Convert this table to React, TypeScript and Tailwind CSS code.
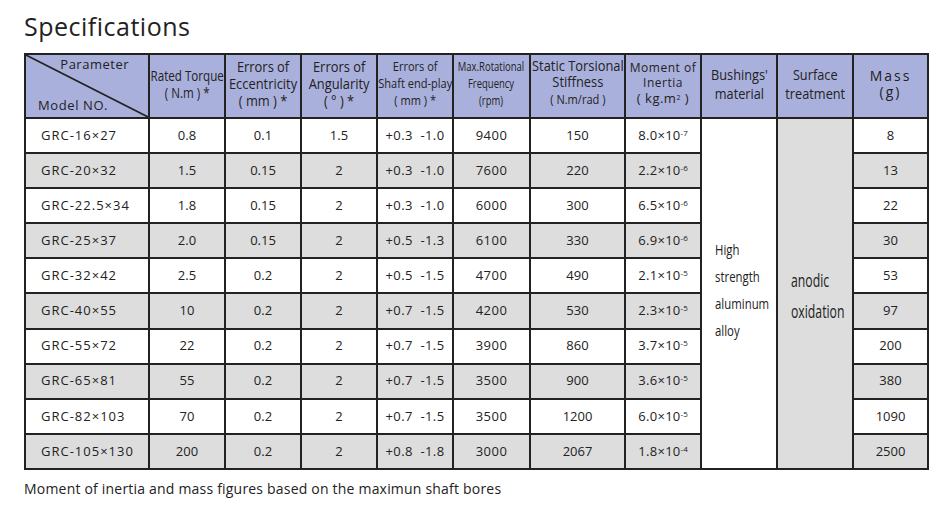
import React from 'react'

type Row = {
  model: string
  torque: string
  ecc: string
  ang: string
  play: string
  freq: string
  stiff: string
  inertia: [string, string]
  mass: string
}

const rows: Row[] = [
  { model: 'GRC-16×27', torque: '0.8', ecc: '0.1', ang: '1.5', play: '+0.3  -1.0', freq: '9400', stiff: '150', inertia: ['8.0', '-7'], mass: '8' },
  { model: 'GRC-20×32', torque: '1.5', ecc: '0.15', ang: '2', play: '+0.3  -1.0', freq: '7600', stiff: '220', inertia: ['2.2', '-6'], mass: '13' },
  { model: 'GRC-22.5×34', torque: '1.8', ecc: '0.15', ang: '2', play: '+0.3  -1.0', freq: '6000', stiff: '300', inertia: ['6.5', '-6'], mass: '22' },
  { model: 'GRC-25×37', torque: '2.0', ecc: '0.15', ang: '2', play: '+0.5  -1.3', freq: '6100', stiff: '330', inertia: ['6.9', '-6'], mass: '30' },
  { model: 'GRC-32×42', torque: '2.5', ecc: '0.2', ang: '2', play: '+0.5  -1.5', freq: '4700', stiff: '490', inertia: ['2.1', '-5'], mass: '53' },
  { model: 'GRC-40×55', torque: '10', ecc: '0.2', ang: '2', play: '+0.7  -1.5', freq: '4200', stiff: '530', inertia: ['2.3', '-5'], mass: '97' },
  { model: 'GRC-55×72', torque: '22', ecc: '0.2', ang: '2', play: '+0.7  -1.5', freq: '3900', stiff: '860', inertia: ['3.7', '-5'], mass: '200' },
  { model: 'GRC-65×81', torque: '55', ecc: '0.2', ang: '2', play: '+0.7  -1.5', freq: '3500', stiff: '900', inertia: ['3.6', '-5'], mass: '380' },
  { model: 'GRC-82×103', torque: '70', ecc: '0.2', ang: '2', play: '+0.7  -1.5', freq: '3500', stiff: '1200', inertia: ['6.0', '-5'], mass: '1090' },
  { model: 'GRC-105×130', torque: '200', ecc: '0.2', ang: '2', play: '+0.8  -1.8', freq: '3000', stiff: '2067', inertia: ['1.8', '-4'], mass: '2500' },
]

const th = 'border-2 border-[#222] bg-[#aab0dc] text-center align-middle font-normal text-[#222] px-0 pt-0 pb-[5px]'
const td = 'border-2 border-[#222] text-center align-middle'

// squeezed, centred text block: the sheet uses a condensed face
function Sq({ className, children }: { className: string; children: React.ReactNode }) {
  return (
    <div className="flex justify-center">
      <span className={`shrink-0 whitespace-nowrap ${className}`}>{children}</span>
    </div>
  )
}

export default function App() {
  return (
    <div className="w-[950px] h-[511px] bg-white text-[#222] px-[24px] pt-[11px] [font-family:'Open_Sans',sans-serif]">
      <h1 className="text-[25px] leading-[30px] tracking-[0.5px] font-normal mb-[12px]">Specifications</h1>

      <table className="table-fixed border-collapse w-[903px] border-2 border-[#222]">
        <colgroup>
          <col className="w-[124px]" />
          <col className="w-[76px]" />
          <col className="w-[76px]" />
          <col className="w-[76px]" />
          <col className="w-[76px]" />
          <col className="w-[77px]" />
          <col className="w-[95px]" />
          <col className="w-[76px]" />
          <col className="w-[76px]" />
          <col className="w-[76px]" />
          <col className="w-[75px]" />
        </colgroup>
        <thead>
          <tr className="h-[64px]">
            <th className={`${th} relative`}>
              {/* diagonal split line */}
              <svg className="absolute inset-0 w-full h-full" viewBox="0 0 100 100" preserveAspectRatio="none">
                <line x1="0" y1="0" x2="100" y2="100" stroke="#222" strokeWidth="1.6" vectorEffect="non-scaling-stroke" />
              </svg>
              <span className="absolute right-[19px] top-0 text-[13px] tracking-[0.5px]">Parameter</span>
              <span className="absolute left-[12px] bottom-[2px] text-[13px] tracking-[0.6px]">Model NO.</span>
            </th>
            <th className={th}>
              <Sq className="text-[14px] leading-[17px] scale-x-[0.83]">Rated Torque<br />( N.m ) *</Sq>
            </th>
            <th className={th}>
              <Sq className="text-[14px] leading-[17px] scale-x-[0.92]">Errors of<br />Eccentricity<br />( mm ) *</Sq>
            </th>
            <th className={th}>
              <Sq className="text-[14px] leading-[17px] scale-x-[0.92]">Errors of<br />Angularity<br />( ° ) *</Sq>
            </th>
            <th className={th}>
              <Sq className="text-[12px] leading-[17px] scale-x-[0.92]">Errors of<br />Shaft end-play<br />( mm ) *</Sq>
            </th>
            <th className={th}>
              <Sq className="text-[12px] leading-[17px] scale-x-[0.79]">Max.Rotational<br />Frequency<br />(rpm)</Sq>
            </th>
            <th className={th}>
              <Sq className="text-[14px] leading-[16px] scale-x-[0.92]">
                Static Torsional<br />Stiffness<br />
                <span className="text-[12px] leading-[20px]">( N.m/rad )</span>
              </Sq>
            </th>
            <th className={`${th} text-[12px] leading-[15px] tracking-[0.5px]`}>
              Moment of<br />Inertia<br />
              <span className="text-[13px] leading-[17px]">( kg.m<sup className="text-[7px]">2</sup> )</span>
            </th>
            <th className={th}>
              <Sq className="text-[15px] leading-[19px] scale-x-[0.85]">Bushings'<br />material</Sq>
            </th>
            <th className={th}>
              <Sq className="text-[15px] leading-[19px] scale-x-[0.85]">Surface<br />treatment</Sq>
            </th>
            <th className={`${th} text-[14px] leading-[16px] tracking-[2px]`}>
              Mass<br />(g)
            </th>
          </tr>
        </thead>
        <tbody className="text-[13px]">
          {rows.map((r, i) => {
            const bg = i % 2 === 1 ? 'bg-[#dddddd]' : 'bg-white'
            return (
              <tr key={r.model} className={`h-[35.1px] ${bg}`}>
                <td className={`${td} text-left pl-[15px] tracking-[1px]`}>{r.model}</td>
                <td className={td}>{r.torque}</td>
                <td className={td}>{r.ecc}</td>
                <td className={td}>{r.ang}</td>
                <td className={`${td} whitespace-pre tracking-[0.4px]`}>{r.play}</td>
                <td className={`${td} tracking-[0.5px]`}>{r.freq}</td>
                <td className={td}>{r.stiff}</td>
                <td className={`${td} tracking-[0.3px]`}>
                  {r.inertia[0]}×10<sup className="text-[8px] tracking-normal">{r.inertia[1]}</sup>
                </td>
                {i === 0 && (
                  <>
                    <td rowSpan={10} className="border-2 border-[#222] bg-white align-middle text-left pl-[13px] pb-[6px]">
                      <span className="inline-block whitespace-nowrap text-[15px] leading-[27px] scale-x-[0.76] origin-left">
                        High<br />strength<br />aluminum<br />alloy
                      </span>
                    </td>
                    <td rowSpan={10} className="border-2 border-[#222] bg-[#dddddd] align-middle text-left pl-[13px] pt-[5px]">
                      <span className="inline-block whitespace-nowrap text-[18px] leading-[31px] scale-x-[0.68] origin-left">
                        anodic<br />oxidation
                      </span>
                    </td>
                  </>
                )}
                <td className={td}>{r.mass}</td>
              </tr>
            )
          })}
        </tbody>
      </table>

      <p className="mt-[10px] text-[14px] leading-[18px] tracking-[0.2px]">
        Moment of inertia and mass figures based on the maximun shaft bores
      </p>
    </div>
  )
}
